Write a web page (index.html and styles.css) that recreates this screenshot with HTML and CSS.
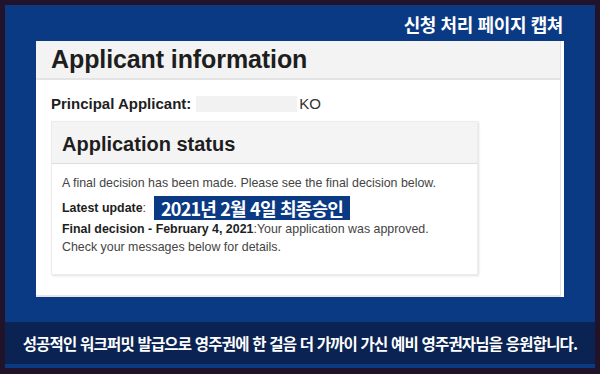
FILE: index.html
```html
<!DOCTYPE html>
<html lang="ko">
<head>
    <meta charset="UTF-8">
    <title>신청 처리 페이지 캡쳐</title>
    <link rel="stylesheet" href="styles.css">
</head>
<body>
    <div class="frame">
        <!-- 상단 제목 -->
        <div class="caption">신청 처리 페이지 캡쳐</div>

        <!-- 캡쳐 화면 -->
        <div class="shot">
            <div class="panel">
                <div class="panel-head">
                    <h1>Applicant information</h1>
                </div>
                <div class="panel-body">
                    <p class="principal">
                        <b>Principal Applicant:</b>
                        <span class="masked"></span>KO
                    </p>

                    <div class="status">
                        <div class="status-head">
                            <h2>Application status</h2>
                        </div>
                        <div class="status-body">
                            <p>A final decision has been made. Please see the final decision below.</p>
                            <p class="update">
                                <b>Latest update</b>:
                                <span class="mark">2021년 2월 4일 최종승인</span>
                            </p>
                            <p><b>Final decision - February 4, 2021</b>:Your application was approved.</p>
                            <p>Check your messages below for details.</p>
                        </div>
                    </div>
                </div>
            </div>
        </div>

        <!-- 하단 문구 -->
        <div class="banner">성공적인 워크퍼밋 발급으로 영주권에 한 걸음 더 가까이 가신 예비 영주권자님을 응원합니다.</div>
    </div>
</body>
</html>
```

FILE: styles.css
```css
/* 기본 */
html, body {
    margin: 0;
    padding: 0;
}

body {
    background-color: #21132a;
    width: 600px;
    height: 374px;
    overflow: hidden;
}

.frame {
    margin: 5px 5px 0 5px;
    height: 363px;
    background-color: #0b3a84;
    display: flex;
    flex-direction: column;
}

/* 상단 제목 */
.caption {
    height: 36px;
    box-sizing: border-box;
    padding: 7px 32px 0 0;
    text-align: right;
    font-family: "Noto Sans CJK KR", sans-serif;
    font-weight: bold;
    font-size: 18px;
    letter-spacing: -0.4px;
    line-height: 24px;
    color: #fff;
}

/* 캡쳐 화면 */
.shot {
    margin: 0 31px;
    height: 256px;
    background-color: #fff;
    font-family: "Liberation Sans", Arial, sans-serif;
}

.panel {
    height: 254px;
    margin-right: 3px;
    border-right: 1px solid #e2e2e2;
    border-bottom: 2px solid #e6e6e6;
}

.panel-head {
    height: 37px;
    background-color: #f3f3f3;
    border-bottom: 2px solid #e4e4e4;
    padding-left: 15px;
}

.panel-head h1 {
    margin: 0;
    font-size: 25px;
    line-height: 37px;
    color: #1e1e1e;
    letter-spacing: -0.1px;
}

.panel-body {
    padding: 15px 0 0 15px;
}

.principal {
    margin: 0;
    font-size: 15px;
    line-height: 18px;
    color: #333;
    display: flex;
    align-items: center;
}

.principal b {
    color: #1e1e1e;
}

.masked {
    display: inline-block;
    width: 101px;
    height: 16px;
    background-color: #f2f2f2;
    margin: 0 2px 0 5px;
}

/* 진행 상태 */
.status {
    width: 425px;
    height: 152px;
    margin-top: 8px;
    border: 1px solid #ececec;
    box-shadow: 1px 1px 2px rgba(0, 0, 0, 0.12);
}

.status-head {
    height: 41px;
    background-color: #f4f4f4;
    border-bottom: 1px solid #dedede;
    padding-left: 10px;
}

.status-head h2 {
    margin: 0;
    font-size: 20px;
    line-height: 44px;
    color: #1e1e1e;
}

.status-body {
    padding: 10px 0 0 10px;
    font-size: 12.4px;
    color: #444;
}

.status-body p {
    margin: 0;
    line-height: 18px;
}

.status-body b {
    color: #1e1e1e;
}

.status-body .update {
    display: flex;
    align-items: center;
    margin: 4px 0 0;
}

.mark {
    display: inline-block;
    margin-left: 8px;
    padding: 0 7px;
    height: 24px;
    line-height: 24px;
    background-color: #0b3a84;
    color: #fff;
    font-family: "Noto Sans CJK KR", sans-serif;
    font-weight: bold;
    font-size: 18px;
    letter-spacing: -0.8px;
}

/* 하단 문구 */
.banner {
    margin-top: 25px;
    height: 42px;
    background-color: #0a2352;
    text-align: center;
    font-family: "Noto Sans CJK KR", sans-serif;
    font-weight: bold;
    font-size: 15.5px;
    letter-spacing: -0.8px;
    line-height: 42px;
    color: #fff;
}
```
